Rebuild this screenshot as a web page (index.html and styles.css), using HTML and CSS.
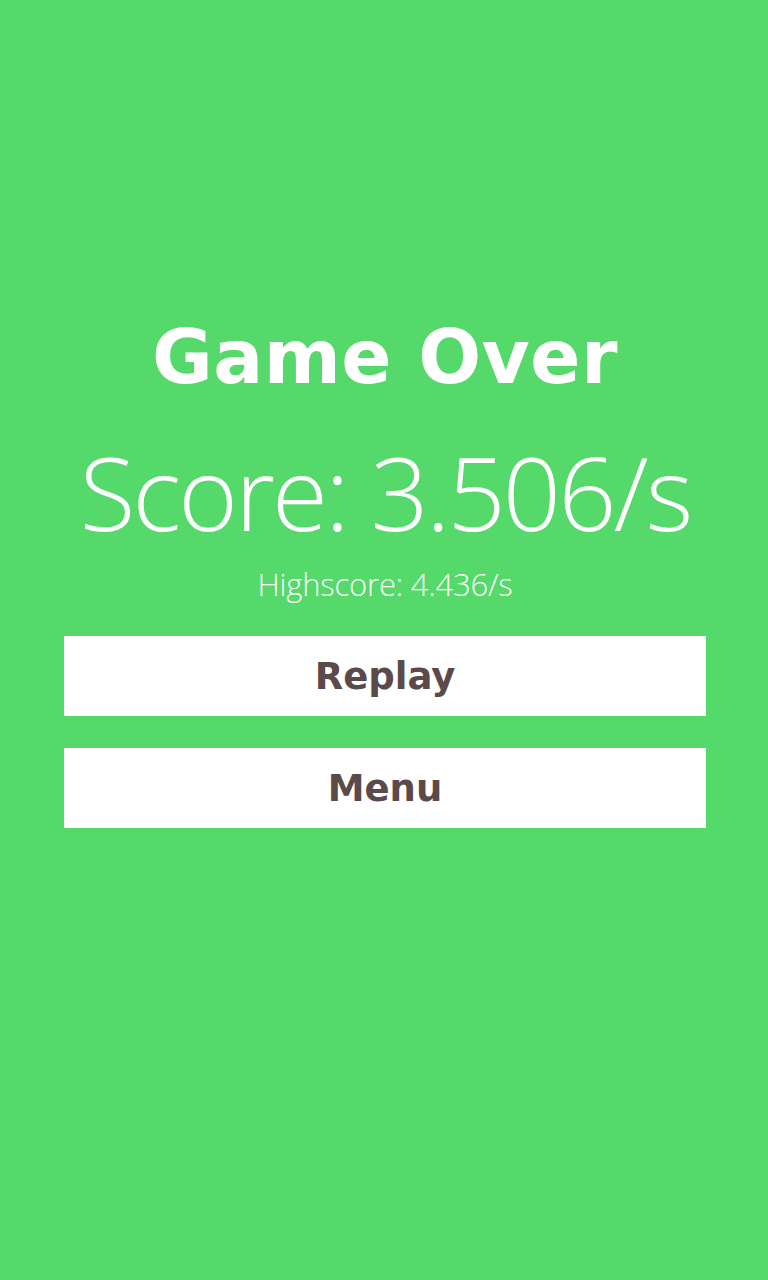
FILE: index.html
```html
<!DOCTYPE html>
<html>
<head>
<meta charset="utf-8">
<link rel="stylesheet" href="styles.css">
</head>
<body>
<main class="screen">
  <h1 class="title">Game Over</h1>
  <div class="score">Score: 3.506/s</div>
  <div class="highscore">Highscore: 4.436/s</div>
  <div class="actions">
    <button class="btn">Replay</button>
    <button class="btn">Menu</button>
  </div>
</main>
</body>
</html>
```
FILE: styles.css
```css
html, body {
  margin: 0;
  padding: 0;
  background: #55d96b;
}
.screen {
  width: 768px;
  height: 1280px;
  box-sizing: border-box;
  padding-top: 317px;
  padding-left: 2px;
  display: flex;
  flex-direction: column;
  align-items: center;
  color: #ffffff;
}
.title {
  margin: 0;
  font-family: "DejaVu Sans", sans-serif;
  font-weight: bold;
  font-size: 74px;
  letter-spacing: 0.5px;
  line-height: 80px;
  height: 80px;
}
.score {
  margin-top: 40px;
  font-family: "Open Sans", sans-serif;
  font-weight: 300;
  font-size: 102px;
  letter-spacing: -2.8px;
  line-height: 110px;
  height: 110px;
}
.highscore {
  margin-top: 17px;
  font-family: "Open Sans", sans-serif;
  font-weight: 300;
  font-size: 31px;
  letter-spacing: -0.2px;
  line-height: 40px;
  height: 40px;
}
.actions {
  margin-top: 32px;
  width: 642px;
  display: flex;
  flex-direction: column;
  gap: 32px;
}
.btn {
  height: 80px;
  border: 0;
  margin: 0;
  padding: 0;
  background: #ffffff;
  color: #5b4a4a;
  font-family: "DejaVu Sans", sans-serif;
  font-weight: bold;
  font-size: 37px;
}
```
